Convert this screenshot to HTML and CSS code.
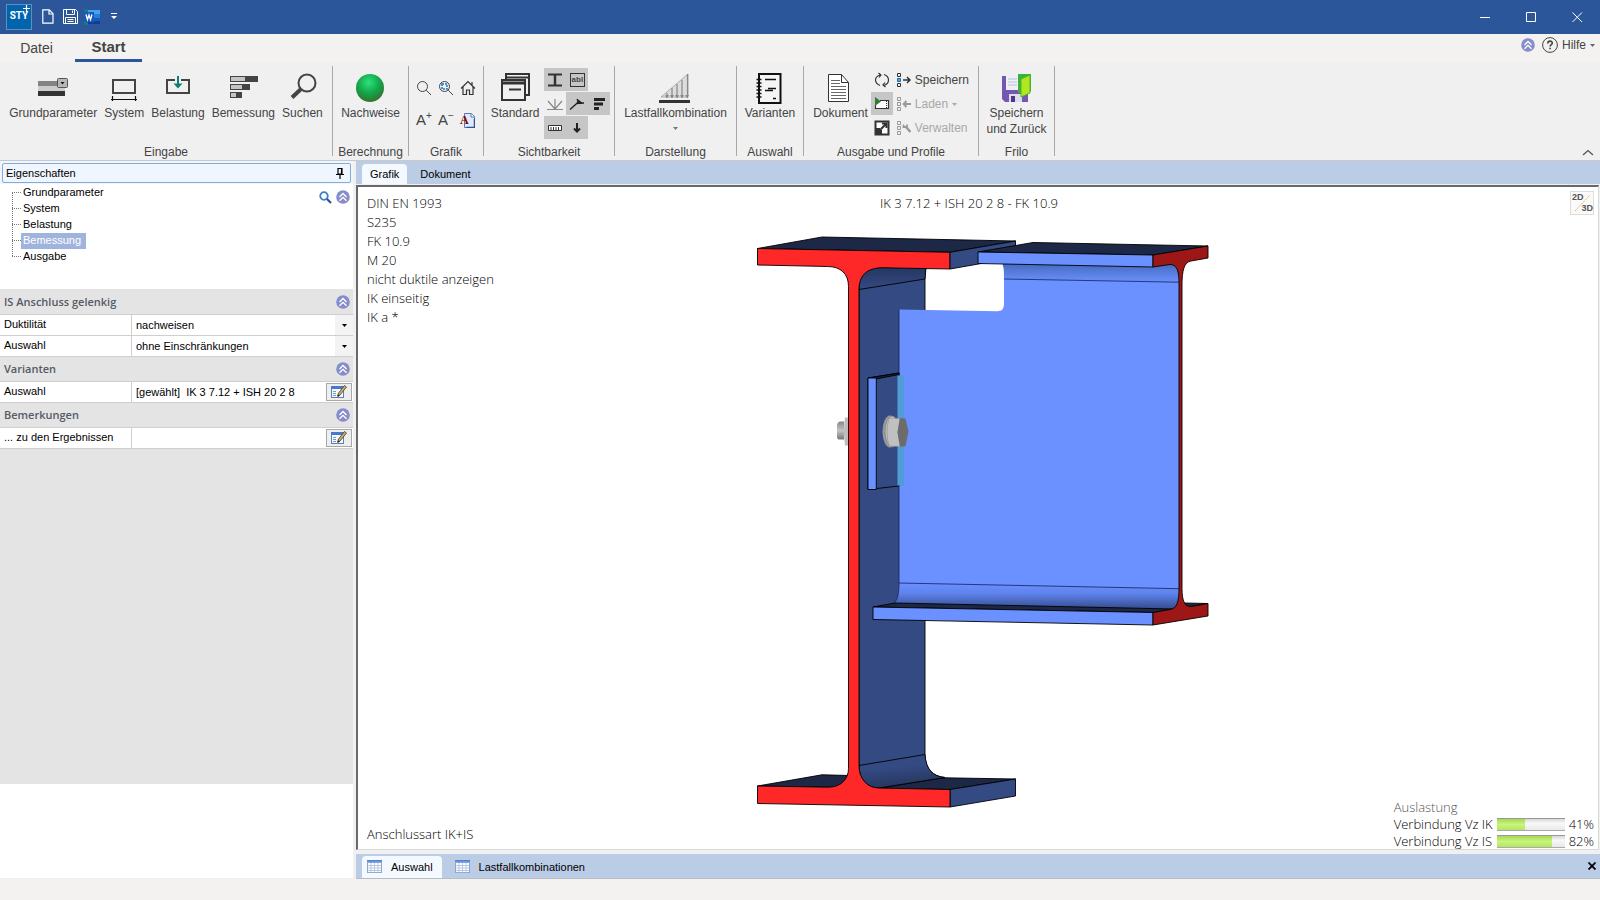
FILE: index.html
```html
<!DOCTYPE html>
<html lang="de">
<head>
<meta charset="utf-8">
<title>STY+ Eigenschaften</title>
<link rel="stylesheet" href="styles.css">
</head>
<body>
<svg class="defs" aria-hidden="true">
  <defs>
    <linearGradient id="g-chev" x1="0" y1="0" x2="1" y2="1"><stop offset="0" stop-color="#7f8fd0"/><stop offset="1" stop-color="#8f8ac6"/></linearGradient>
    <linearGradient id="g-cell" x1="0" y1="0" x2="0" y2="1"><stop offset="0" stop-color="#4a78cc"/><stop offset="1" stop-color="#8fb0e6"/></linearGradient>
    <symbol id="chev" viewBox="0 0 14 14"><circle cx="7" cy="7" r="6.800" fill="url(#g-chev)"/><path d="M3.500 7L7 3.500 10.500 7M3.500 10.800L7 7.300l3.500 3.500" fill="none" stroke="#fff" stroke-width="1.300"/></symbol>
    <symbol id="edit" viewBox="0 0 16 14"><rect x=".5" y="1.500" width="12" height="11" fill="#f4f8ff" stroke="#5d7fb5"/><rect x="0" y="1" width="13" height="3" fill="#4a78cc"/><path d="M2 6.500h3M2 8.500h3M2 10.500h3" stroke="#7d98c6"/><path d="M6.500 11l1-3 6-7.500L15.500 2l-6.500 8z" fill="#c9ae6c" stroke="#4a3c22" stroke-width=".8"/><path d="M6.500 12l.6-2.500L9 10.800z" fill="#222"/></symbol>
    <symbol id="sheet" viewBox="0 0 16 14"><rect x=".5" y=".5" width="14" height="12" fill="#fff" stroke="#8ea6c9"/><rect x="0" y="0" width="15" height="3" fill="url(#g-cell)"/><path d="M1 5.500h13M1 8h13M1 10.500h13M4 3v10M7.500 3v10M11 3v10" stroke="#a9bedc" stroke-width=".8"/></symbol>
    <symbol id="boxes" viewBox="0 0 4 14"><path d="M.5.500h3v3h-3zM.5 5.500h3v3h-3zM.5 10.500h3v3h-3z"/></symbol>
  </defs>
</svg>

<header class="titlebar">
  <div class="logo"><span>STY</span><svg width="7" height="7" viewBox="0 0 7 7" stroke="#fff" stroke-width="1.200"><path d="M3.500 0v7M0 3.500h7"/></svg></div>
  <button class="qa" aria-label="Neu"><svg width="12" height="15" viewBox="0 0 12 15" fill="none" stroke="#fff"><path d="M.8.800h6.500l3.700 3.900v9.500H.8zM7 1v4h4" stroke-width="1.200"/></svg></button>
  <button class="qa" aria-label="Speichern"><svg width="15" height="15" viewBox="0 0 15 15" fill="none" stroke="#fff"><path d="M.5.500h12l2 2v12H.5zM3.500 1v4.500h8V1M9.500 1.500v2.500M2.500 14V8.500h10V14M4.500 10.500h6M4.500 12.500h6"/></svg></button>
  <button class="qa" aria-label="Word"><svg width="16" height="16" viewBox="0 0 16 16"><path d="M3 1h13v4H3z" fill="#41a5ee"/><path d="M3 5h13v4H3z" fill="#2b7cd3"/><path d="M3 9h13v3H3z" fill="#185abd"/><path d="M3 12h13v3H3z" fill="#103f91"/><rect x="0" y="0" width="4" height="16" fill="#157a80"/><rect x="0" y="3" width="10" height="10" fill="#185abd"/><path d="M2 5.500l1.500 5L5 6l1.500 4.500L8 5.500" fill="none" stroke="#fff" stroke-width="1.300"/></svg></button>
  <button class="qa" aria-label="Anpassen"><svg width="6" height="7" viewBox="0 0 6 7" fill="#fff"><path d="M0 0h6v1H0zM0 3h6L3 6z"/></svg></button>
  <div class="winctl">
    <button aria-label="Minimieren"><svg width="11" height="11" viewBox="0 0 11 11" stroke="#fff"><path d="M0 5.500h10"/></svg></button>
    <button aria-label="Maximieren"><svg width="11" height="11" viewBox="0 0 11 11" stroke="#fff" fill="none"><path d="M.5.500h9v9h-9z"/></svg></button>
    <button aria-label="Schließen"><svg width="11" height="11" viewBox="0 0 11 11" stroke="#fff"><path d="M.5.500l9.500 9.500M10 .5L.5 10"/></svg></button>
  </div>
</header>

<nav class="menu">
  <button class="menutab">Datei</button>
  <button class="menutab active">Start</button>
  <div class="help">
    <svg width="14" height="14"><use href="#chev"/></svg>
    <button class="helpbtn"><svg width="16" height="16" viewBox="0 0 16 16" fill="none" stroke="#444"><circle cx="8" cy="8" r="7.400"/><path d="M5.800 6.400c0-3 4.500-3 4.500-.4 0 1.600-2.200 1.600-2.200 3.500M8.100 10.700v1.600" stroke-width="1.600"/></svg>Hilfe<svg width="5" height="3" viewBox="0 0 5 3"><path d="M0 0h5L2.500 3z" fill="#666"/></svg></button>
  </div>
</nav>

<section class="ribbon">
  <div class="group g-in">
    <div class="tools">
      <button class="big"><svg width="32" height="32" viewBox="0 0 32 32"><path d="M1 8h27v5H1z" fill="#858585"/><path d="M1 13h27v5H1z" fill="#cdcdcd"/><path d="M1 18h27v5H1z" fill="#333"/><rect x="20.500" y="5.500" width="10" height="9" rx="1" fill="#b8b8b8" stroke="#555"/><path d="M23.500 9h4L25.500 11.500z" fill="#111"/></svg>Grundparameter</button>
      <button class="big"><svg width="32" height="32" viewBox="0 0 32 32" fill="none" stroke="#444"><path d="M5 7h22v13H5z" stroke-width="2"/><path d="M3 26.500h26M4.500 23v5M27.500 23v5" stroke="#111" stroke-width="1.200"/></svg>System</button>
      <button class="big"><svg width="32" height="32" viewBox="0 0 32 32" fill="none"><path d="M5 7h22v13H5z" stroke="#444" stroke-width="2"/><path d="M16 3v10" stroke="#f0f0f0" stroke-width="6"/><path d="M16 3v10" stroke="#0b8074" stroke-width="2"/><path d="M11.500 10.500l4.500 5 4.500-5z" fill="#0b8074"/></svg>Belastung</button>
      <button class="big"><svg width="32" height="32" viewBox="0 0 32 32"><path d="M3 3h28v6H3zM3 11h20v6H3zM3 19h12v6H3z" fill="#444"/><path d="M4 4h14v4H4zM4 12h11v4H4zM4 20h5v4H4z" fill="#c4c4c4"/></svg>Bemessung</button>
      <button class="big"><svg width="32" height="32" viewBox="0 0 32 32" fill="none" stroke="#444"><circle cx="21" cy="10" r="8.500" stroke-width="2"/><path d="M15 16L6 24.500" stroke-width="4"/></svg>Suchen</button>
    </div>
    <div class="caption">Eingabe</div>
  </div>
  <div class="group g-calc">
    <div class="tools"><button class="big"><svg width="32" height="32" viewBox="0 0 32 32"><defs><radialGradient id="g-ball" cx=".45" cy=".3" r=".75"><stop offset="0" stop-color="#2fe07c"/><stop offset=".5" stop-color="#12a94c"/><stop offset=".85" stop-color="#2c7d33"/><stop offset="1" stop-color="#5b6d2e"/></radialGradient></defs><circle cx="16" cy="15" r="14" fill="url(#g-ball)"/></svg>Nachweise</button></div>
    <div class="caption">Berechnung</div>
  </div>
  <div class="group g-graf">
    <div class="tools grid3">
      <button class="ico" aria-label="Zoom"><svg width="16" height="16" viewBox="0 0 16 16" fill="none" stroke="#444"><circle cx="6.500" cy="6.500" r="5"/><path d="M10.200 10.200L15 15"/></svg></button>
      <button class="ico" aria-label="Zoom Bereich"><svg width="16" height="16" viewBox="0 0 16 16" fill="none" stroke="#444"><circle cx="6.500" cy="6.500" r="5"/><path d="M10.200 10.200L15 15"/><path d="M4 4h5v5H4z" stroke="#1877c9" stroke-width="1.500" stroke-dasharray="2 1"/></svg></button>
      <button class="ico" aria-label="Gesamtansicht"><svg width="16" height="16" viewBox="0 0 16 16" fill="none" stroke="#333" stroke-width="1.200"><path d="M1 8.500l7-7 7 7M3 7v7.500h3.500V10h3v4.500H13V7M12 5V2"/></svg></button>
      <button class="ico letter">A<sup>+</sup></button>
      <button class="ico letter">A<sup>−</sup></button>
      <button class="ico docA"><svg width="14" height="15" viewBox="0 0 14 15"><path d="M3.500.500h7l3 3v11h-10z" fill="#dfeafb" stroke="#5b78b5"/><path d="M13.500 6v8.500h-8" fill="none" stroke="#2f4f9a" stroke-width="1.500"/><path d="M10 .5v3.500h3.500" fill="#fff" stroke="#5b78b5"/></svg><b>A</b></button>
    </div>
    <div class="caption">Grafik</div>
  </div>
  <div class="group g-vis">
    <div class="tools">
      <button class="big"><svg width="32" height="32" viewBox="0 0 32 32" fill="none" stroke="#333"><path d="M7 1h23v21h-3" stroke-width="2"/><path d="M7 4.500h23M7 0v8" stroke-width="2"/><path d="M3 7h23v20H3z" stroke-width="2"/><path d="M3 10h23" stroke-width="3"/><path d="M10 16.500h12" stroke-width="2"/></svg>Standard</button>
      <div class="toggles">
        <div><button class="tg on" aria-label="Profil"><svg width="16" height="16" viewBox="0 0 16 16" fill="none" stroke="#333"><path d="M1 2.500h14M1 13.500h14" stroke-width="2"/><path d="M8 3v10" stroke-width="2.500"/></svg></button><button class="tg on abl">abl</button></div>
        <div><button class="tg" aria-label="Linien"><svg width="16" height="16" viewBox="0 0 16 16" fill="none" stroke="#888"><path d="M0 13.500h16M8 13V3M8 13L1 5M8 13l7-8" stroke-width="1.200"/></svg></button><button class="tg on" aria-label="Winkel"><svg width="16" height="16" viewBox="0 0 16 16" fill="none" stroke="#222"><path d="M1 13.500l9-8M7 7.500l8-.5" stroke-width="1.500"/><path d="M8 3l1 4h4z" fill="#222"/></svg></button><button class="tg on" aria-label="Balken"><svg width="16" height="16" viewBox="0 0 16 16"><path d="M3 2h11v3H3zM3 6.500h9v3H3zM3 11h5v3H3z" fill="#222"/></svg></button></div>
        <div><button class="tg on" aria-label="Maß"><svg width="16" height="16" viewBox="0 0 16 16" fill="none" stroke="#333"><path d="M1.500 5.500h13v5h-13z" fill="#fff"/><path d="M4 7v3M6.500 7v3M9 7v3M11.500 7v3"/></svg></button><button class="tg on" aria-label="Last"><svg width="16" height="16" viewBox="0 0 16 16" fill="none" stroke="#222" stroke-width="2"><path d="M8 3v9M5 8.500l3 3 3-3"/></svg></button></div>
      </div>
    </div>
    <div class="caption">Sichtbarkeit</div>
  </div>
  <div class="group g-view">
    <div class="tools"><button class="big"><svg width="32" height="32" viewBox="0 0 32 32"><path d="M2 24L29 1v23z" fill="#ddd" stroke="#888" stroke-width=".6"/><path d="M8 20v5M13 15v10M18 11v14M23 7v18M28.500 1v24" stroke="#888" stroke-width="1.200"/><path d="M6 22h4l-2 3zM11 22h4l-2 3zM16 22h4l-2 3zM21 22h4l-2 3zM26 22h4l-2 3z" fill="#888"/><path d="M0 27h31v3H0z" fill="#333"/></svg>Lastfallkombination<svg class="drop" width="5" height="3" viewBox="0 0 5 3"><path d="M0 0h5L2.500 3z" fill="#777"/></svg></button></div>
    <div class="caption">Darstellung</div>
  </div>
  <div class="group g-var">
    <div class="tools"><button class="big"><svg width="32" height="32" viewBox="0 0 32 32" fill="none" stroke="#111"><path d="M5 1h21.500v29H5z" stroke-width="2" fill="#f4f4f4"/><path d="M2.500 6.500h5M2.500 10h5M2.500 13.500h5M2.500 17h5M2.500 20.500h5M2.500 24h5" stroke-width="1.500"/><path d="M11 6.500h11M14 15.500h8M11 17.500h8M19 25.500h3" stroke-width="1.300"/></svg>Varianten</button></div>
    <div class="caption">Auswahl</div>
  </div>
  <div class="group g-out">
    <div class="tools">
      <button class="big"><svg width="32" height="32" viewBox="0 0 32 32" fill="#fff" stroke="#333"><path d="M4.500 1.500h13l7 8v19h-20z"/><path d="M17.500 1.500v8h7" fill="none"/><path d="M7 7.500h9M7 10.500h9M7 13.500h15M7 16.500h15M7 19.500h15M7 22.500h15M7 25.500h15" stroke="#666"/></svg>Dokument</button>
      <div class="iconcol">
        <button class="tg" aria-label="Aktualisieren"><svg width="16" height="16" viewBox="0 0 16 16" fill="none" stroke="#333" stroke-width="1.200"><path d="M6 13.500C0 11 0 5 6 3M10 2.500c6 2 6 9 0 11M4.500 1l2.500 2-2 2.500M11.500 15L9 13l2-2.500"/></svg></button>
        <button class="tg on" aria-label="Vorschau"><svg width="16" height="16" viewBox="0 0 16 16"><path d="M6 4.500h8.500v8h-13V9" fill="#fff" stroke="#333" stroke-width="1.200"/><path d="M12.500 5v7" stroke="#333" stroke-dasharray="1 1"/><path d="M1 1l6 4.500L1 10z" fill="#2e7d32"/></svg></button>
        <button class="tg" aria-label="Vergrößern"><svg width="16" height="16" viewBox="0 0 16 16"><path d="M1.500 1.500h13v13h-13z" fill="#fff" stroke="#333" stroke-width="2"/><path d="M1 8h5l2 2v5H1z" fill="#333"/><path d="M7 9l5-5M8 3.500h4.500V8" fill="none" stroke="#333" stroke-width="2"/></svg></button>
      </div>
      <div class="lines">
        <button><svg width="14" height="14" viewBox="0 0 14 14" fill="none" stroke="#333"><path d="M.5.500h3v3h-3zM.5 10.500h3v3h-3z"/><path d="M.5 5.500h3v3h-3z" fill="#49a6e0" stroke="#1b6fae"/><path d="M6 7h7M10 4l3 3-3 3" stroke-width="1.500"/></svg>Speichern</button>
        <button disabled><svg width="14" height="14" viewBox="0 0 14 14" fill="none" stroke="#999"><use href="#boxes" width="4" height="14"/><path d="M6.500 7h7.500M9.500 4l-3 3 3 3" stroke-width="1.800"/></svg>Laden<svg width="5" height="3" viewBox="0 0 5 3"><path d="M0 0h5L2.500 3z" fill="#aaa"/></svg></button>
        <button disabled><svg width="14" height="14" viewBox="0 0 14 14" fill="none" stroke="#999"><use href="#boxes" width="4" height="14"/><path d="M9 6l4.500 5" stroke-width="2.500"/><path d="M6.500 3.500v2.500h3.500V3.500" stroke-width="1.800"/></svg>Verwalten</button>
      </div>
    </div>
    <div class="caption">Ausgabe und Profile</div>
  </div>
  <div class="group g-frilo">
    <div class="tools"><button class="big"><svg width="32" height="32" viewBox="0 0 32 32"><path d="M1 3h26v26H4l-3-3z" fill="#7358b0"/><path d="M5 3h13v14H5z" fill="#eef0f6"/><path d="M7 6h9M7 9h9M7 12h9" stroke="#bcc2d2"/><path d="M8 21h13v8H8z" fill="#dcdcea"/><path d="M10 23h4v6h-4z" fill="#4c3688"/><path d="M17 1h13v17l-3 2H17z" fill="#3bb23f"/><path d="M20 6l9-4v18l-9 4z" fill="#b2e61d" stroke="#4cb52c"/></svg>Speichern<br>und Zurück</button></div>
    <div class="caption">Frilo</div>
  </div>
  <button class="collapse" aria-label="Menüband reduzieren"><svg width="12" height="7" viewBox="0 0 12 7" fill="none" stroke="#555" stroke-width="1.300"><path d="M1 6l5-4.500L11 6"/></svg></button>
</section>

<div class="work">
  <aside class="side">
    <div class="sidehead"><div class="sidetitle">Eigenschaften<svg width="8" height="11" viewBox="0 0 8 11" fill="none" stroke="#000"><path d="M2 .5h4V6H2zM0 6.500h8M4 7v4M5.500 1v5" stroke-width="1.200"/></svg></div></div>
    <div class="treebox">
      <ul class="tree">
        <li><a href="#">Grundparameter</a></li>
        <li><a href="#">System</a></li>
        <li><a href="#">Belastung</a></li>
        <li><a href="#" class="sel">Bemessung</a></li>
        <li><a href="#">Ausgabe</a></li>
      </ul>
      <div class="treetools">
        <svg width="13" height="13" viewBox="0 0 13 13" fill="none"><circle cx="5" cy="5" r="3.800" stroke="#3b82cc" stroke-width="1.800"/><path d="M8 8l4 4" stroke="#2c4f9c" stroke-width="2.200"/></svg>
        <svg width="14" height="14"><use href="#chev"/></svg>
      </div>
    </div>
    <h2>IS Anschluss gelenkig<svg width="14" height="14"><use href="#chev"/></svg></h2>
    <div class="row"><label for="dukt">Duktilität</label><div class="val"><select id="dukt"><option>nachweisen</option></select><span class="arr"><svg width="5" height="3" viewBox="0 0 5 3"><path d="M0 0h5L2.500 3z"/></svg></span></div></div>
    <div class="row"><label for="ausw">Auswahl</label><div class="val"><select id="ausw"><option>ohne Einschränkungen</option></select><span class="arr"><svg width="5" height="3" viewBox="0 0 5 3"><path d="M0 0h5L2.500 3z"/></svg></span></div></div>
    <h2>Varianten<svg width="14" height="14"><use href="#chev"/></svg></h2>
    <div class="row"><label for="vari">Auswahl</label><div class="val"><input id="vari" value="[gewählt]&nbsp; IK 3 7.12 + ISH 20 2 8"><button class="edit" aria-label="Variante bearbeiten"><svg width="16" height="14"><use href="#edit"/></svg></button></div></div>
    <h2>Bemerkungen<svg width="14" height="14"><use href="#chev"/></svg></h2>
    <div class="row"><label for="bem">... zu den Ergebnissen</label><div class="val"><input id="bem" value=""><button class="edit" aria-label="Bemerkung bearbeiten"><svg width="16" height="14"><use href="#edit"/></svg></button></div></div>
    <div class="filler"></div>
    <div class="hint"></div>
  </aside>

  <main class="main">
    <div class="tabs"><button class="tab active">Grafik</button><button class="tab">Dokument</button></div>
    <div class="canvas">
      <svg class="model" viewBox="358 187 1240 661" role="img" aria-label="3D-Ansicht Anschluss">
        <defs>
          <linearGradient id="f1" x1="0" y1="0" x2="0" y2="1"><stop offset="0" stop-color="#253662"/><stop offset="1" stop-color="#344a82"/></linearGradient>
          <linearGradient id="f2" x1="0" y1="0" x2="0" y2="1"><stop offset="0" stop-color="#466bc0"/><stop offset="1" stop-color="#6b90ff"/></linearGradient>
          <linearGradient id="f3" x1="0" y1="0" x2="0" y2="1"><stop offset="0" stop-color="#6b90ff"/><stop offset=".4" stop-color="#5f83ec"/><stop offset="1" stop-color="#32498a"/></linearGradient>
          <linearGradient id="f4" x1="0" y1="0" x2=".25" y2="1"><stop offset="0" stop-color="#344a82"/><stop offset=".45" stop-color="#344a82"/><stop offset="1" stop-color="#26375f"/></linearGradient>
          <linearGradient id="nut" x1="0" y1="0" x2="0" y2="1"><stop offset="0" stop-color="#888"/><stop offset=".5" stop-color="#c4c4c4"/><stop offset="1" stop-color="#777"/></linearGradient>
        </defs>
        <g stroke="#000" stroke-width=".9" stroke-linejoin="round">
          <path d="M757.500 248L822 236.500l193.500 4-65.500 11.300z" fill="#1c2846"/>
          <path d="M757.500 785.500L822 774.300l122 3 71.500 1.200L950 789z" fill="#1c2846"/>
          <path d="M950 789l65.500-10.500v17L950 806.500z" fill="#344a82"/>
          <path d="M859 266h67.500c-1.500 4-1.500 8-1.500 12v476c0 15 8 22 20 23l-66 10.500h-20z" fill="#344a82"/>
          <path d="M859 267h67l-1 11.500-66 10.500z" fill="url(#f1)"/>
          <path d="M859 765l66-11c1 15 8 22 20 23l-66 10.500c-12 0-20-8-20-22.500z" fill="url(#f4)"/>
          <path d="M757.500 248L950 251.800v16.700l-67-1.200c-17-.3-24 8.700-24 21.700v476c0 13 8 22.500 20 22.500l71 1.500v17.500L757.500 803v-17.500l70 1.200c14 .3 21-8.700 21-18.700V286c0-13-8-20-21-20l-70-1.500z" fill="#ff2828"/>
          <path d="M950 268.500v-16.700l65.500-11.300V256l-37 7.500z" fill="#344a82"/>
        </g>
        <path d="M899 309l98 1.800q7 .2 7-7V264h175v344H894c4-4 5-12 5-25z" fill="#6b90ff"/>
        <path d="M1004 278c0-7 0-10-1.500-14.500H1178l1 18z" fill="url(#f2)"/>
        <path d="M899 582.500l280 5.500c0 13-2 20-6 21L894 603c4-4 5-12 5-20.500z" fill="url(#f3)"/>
        <path d="M1004 278.500l175 3.200M899 582.500l280 5.700M899 309v273c0 10-1 17-5 20.500" fill="none" stroke="#122454" stroke-width=".8"/>
        <g stroke="#000" stroke-width=".9" stroke-linejoin="round">
          <path d="M978 251.500l55-9.500 175 3.500-55 9z" fill="#1c2846"/>
          <path d="M978 251.500l175 3v12L978 263z" fill="#6b90ff"/>
          <path d="M873 606.500l22-4 279 6-21 3.500z" fill="#1c2846"/>
          <path d="M873 606.500l280 5.500v12.500L873 619z" fill="#6b90ff"/>
          <path d="M1184 602.500l24 .5-20 3.500z" fill="#1c2846"/>
          <path d="M1153 254.500l55-9v12l-17 3c-7 1-9 10-9 24V588c0 11 2 18 9 18l17-3v12.500l-55 9V612l17-3c7-1 9-8 9-21V282c0-11-2-18-9-18l-17 2.500z" fill="#9d1717"/>
          <path d="M868 377.500l31-5v113l-31 3.500z" fill="#344a82"/>
          <path d="M868 377.500l31-5v1.500l-23 4.500z" fill="#14203f"/>
          <path d="M868 377.500h8.300V489H868z" fill="#6b90ff"/>
        </g>
        <path d="M897.500 375h6.500v110h-6.500z" fill="#529bd9"/>
        <path d="M845 417h3v28h-3q-2-14 0-28z" fill="#bdbdbd"/>
        <path d="M837 424q1-3 3-3h4v18h-5q-2 0-2-3z" fill="url(#nut)"/>
        <ellipse cx="890" cy="431" rx="7.500" ry="16" fill="#9b9b9b"/>
        <ellipse cx="892" cy="431" rx="7" ry="15.500" fill="#c2c2c2" stroke="#777" stroke-width=".7"/>
        <path d="M889 417.500l11 .5-2 13 2 15-11-.5q-4-14 0-28z" fill="#c0c0c0" stroke="#8a8a8a" stroke-width=".6"/>
        <path d="M900 417.500l5.500.5 3 13-3 15H900l-2.500-14z" fill="#6c6c6c"/>
      </svg>
      <div class="info">DIN EN 1993<br>S235<br>FK 10.9<br>M 20<br>nicht duktile anzeigen<br>IK einseitig<br>IK a *</div>
      <div class="heading">IK 3 7.12 + ISH 20 2 8 - FK 10.9</div>
      <button class="dim"><span>2D</span><span>3D</span><svg width="22" height="22" viewBox="0 0 22 22"><path d="M4 19L19 3" stroke="#efb65a" stroke-dasharray="2 1"/></svg></button>
      <div class="kind">Anschlussart IK+IS</div>
      <div class="usage">
        <span class="dimtext">Auslastung</span><i></i><i></i>
        <span>Verbindung Vz IK</span><div class="bar"><div class="fill" style="width:41%"></div></div><span>41%</span>
        <span>Verbindung Vz IS</span><div class="bar"><div class="fill" style="width:82%"></div></div><span>82%</span>
      </div>
    </div>
    <div class="bottomtabs">
      <button class="tab active"><svg width="16" height="14"><use href="#sheet"/></svg>Auswahl</button>
      <button class="tab"><svg width="16" height="14"><use href="#sheet"/></svg>Lastfallkombinationen</button>
      <button class="close" aria-label="Schließen"><svg width="8" height="8" viewBox="0 0 8 8" stroke="#000" stroke-width="1.800"><path d="M.5.500l7 7M7.500.500l-7 7"/></svg></button>
    </div>
  </main>
</div>
<footer class="status"></footer>
</body>
</html>
```
FILE: styles.css
```css
* { box-sizing: border-box; }
html, body { height: 100%; }
body {
  margin: 0;
  display: flex;
  flex-direction: column;
  min-height: 100vh;
  overflow: hidden;
  background: #f0f0f0;
  color: #444;
  font: 12px/16px "Liberation Sans", Arial, sans-serif;
}
button, input, select { font: inherit; color: inherit; background: none; border: 0; padding: 0; margin: 0; border-radius: 0; }
svg { display: block; flex: none; }
.defs { position: absolute; width: 0; height: 0; }

/* title bar */
.titlebar { display: flex; align-items: center; height: 34px; background: #2b579a; padding-left: 6px; }
.logo { width: 26px; height: 26px; margin-right: 8px; background: #0064ae; border: 1px solid #6390b4; color: #fff; font: 700 10px/22px "Roboto", sans-serif; text-align: center; position: relative; }
.logo svg { position: absolute; right: 1px; top: 0; }
.qa { width: 16px; height: 22px; margin-right: 6px; padding-bottom: 1px; display: flex; align-items: center; justify-content: center; }
.winctl { margin-left: auto; display: flex; }
.winctl button { width: 46px; height: 34px; display: flex; align-items: center; justify-content: center; }

/* menu */
.menu { display: flex; align-items: flex-start; height: 28px; background: #f3f2f1; }
.menutab { font-size: 14px; line-height: 26px; height: 28px; width: 73px; }
.menutab.active { font-size: 15px; font-weight: 700; width: 67px; margin-left: 2px; border-bottom: 3px solid #2b579a; }
.help { margin-left: auto; display: flex; align-items: center; gap: 7px; padding: 3px 5px 0 0; }
.helpbtn { display: flex; align-items: center; gap: 4px; }

/* ribbon */
.ribbon { display: flex; height: 99px; padding: 4px 0; border-bottom: 1px solid #c8c8c8; }
.group { display: flex; flex-direction: column; border-right: 1px solid #a8a8a8; height: 90px; }
.tools { display: flex; flex: 1; justify-content: center; align-items: flex-start; }
.caption { text-align: center; line-height: 16px; margin-bottom: -4px; white-space: nowrap; }
.big { display: flex; flex-direction: column; align-items: center; padding-top: 7px; white-space: nowrap; line-height: 16px; }
.drop { margin-top: 6px; }
.g-in { width: 333px; }
.g-in .tools { gap: 7px; }
.g-calc { width: 76px; }
.g-graf { width: 75px; }
.g-vis { width: 131px; }
.g-view { width: 122px; }
.g-var { width: 67px; }
.g-out { width: 175px; }
.g-frilo { width: 76px; }
.grid3 { display: grid; grid-template-columns: repeat(3, 22px); grid-auto-rows: 32px; padding-top: 6px; }
.ico { display: flex; align-items: center; justify-content: center; position: relative; width: 22px; height: 32px; }
.letter { font-size: 15px; }
.letter sup { font-size: 10px; line-height: 8px; align-self: flex-start; padding-top: 8px; }
.docA b { position: absolute; left: 3px; top: 9px; font: 700 12px/14px "Liberation Serif", serif; color: #8b0000; }
.g-vis .tools { gap: 5px; padding-left: 3px; }
.toggles { padding-top: 2px; }
.toggles > div { display: flex; height: 24px; }
.tg { width: 22px; height: 23px; display: flex; align-items: center; justify-content: center; }
.tg.on { background: #c6c6c6; }
.abl { font: 700 8px/10px "Liberation Sans", sans-serif; }
.abl::before { content: ""; position: absolute; width: 13px; height: 12px; border: 1px solid #333; }
.iconcol { display: flex; flex-direction: column; gap: 1px; padding-top: 2px; margin-left: 3px; }
.lines { display: flex; flex-direction: column; padding-top: 2px; margin-left: 4px; }
.lines button { height: 24px; display: flex; align-items: center; gap: 4px; }
.lines button:disabled { color: #a8a8a8; }
.collapse { margin-left: auto; align-self: flex-end; padding: 0 6px 0 0; }

/* work area */
.work { flex: 1; display: flex; min-height: 0; color: #000; font-size: 11px; }
.side { width: 353px; display: flex; flex-direction: column; margin-right: 3px; }
.sidehead { background: #eef5fd; padding: 2px 2px 1px; }
.sidetitle { display: flex; align-items: center; justify-content: space-between; height: 20px; border: 1px solid #86abd9; border-radius: 2px; padding: 0 6px 0 3px; background: #eff6ff; }
.treebox { display: flex; justify-content: space-between; background: #fff; height: 105px; padding: 0 3px 0 12px; }
.tree { list-style: none; margin: 0; padding: 0; }
.tree li { height: 16px; padding-left: 9px; position: relative; }
.tree li::before { content: ""; position: absolute; left: 0; top: 8px; width: 9px; border-top: 1px dotted #777; }
.tree li::after { content: ""; position: absolute; left: 0; top: 8px; height: 16px; border-left: 1px dotted #777; }
.tree li:last-child::after { display: none; }
.tree a { display: inline-block; line-height: 14px; height: 16px; padding: 0 5px 0 2px; color: #000; text-decoration: none; }
.tree .sel { background: #9fb4dc; color: #fff; }
.treetools { display: flex; gap: 4px; padding-top: 6px; height: 20px; align-items: center; }
.side h2 { margin: 0; height: 25px; padding: 0 3px 0 4px; display: flex; align-items: center; justify-content: space-between; background: #e4e4e4; color: #555a66; font: 600 11px/24px "Open Sans", "Noto Sans", sans-serif; }
.row { display: grid; grid-template-columns: 131px 1fr; height: 21px; background: #fff; border-top: 1px solid #cfcfcf; }
.row + h2, .row + .filler { border-top: 1px solid #cfcfcf; }
.row label { padding-left: 4px; line-height: 19px; }
.val { display: flex; border-left: 1px solid #cfcfcf; min-width: 0; }
.val select, .val input { flex: 1; min-width: 0; appearance: none; padding-left: 4px; line-height: 20px; color: #000; outline: 0; }
.arr { width: 18px; background: #f3f3f3; display: flex; align-items: center; justify-content: center; pointer-events: none; }
.edit { width: 26px; height: 18px; margin: 1px; border: 1px solid #a8a8a8; background: #eee; display: flex; align-items: center; justify-content: center; }
.filler { flex: 335; background: #e4e4e4; }
.hint { flex: 94; background: #fff; margin-bottom: 1px; }

.main { flex: 1; min-width: 0; display: flex; flex-direction: column; }
.tabs { display: flex; align-items: flex-end; height: 23px; background: #bbcde6; padding-left: 6px; }
.tab { display: flex; align-items: center; gap: 8px; height: 20px; padding: 0 8px; color: #000; }
.tab.active { background: #f3f9ff; border-radius: 4px 4px 0 0; }
.tabs .tab + .tab { margin-left: 5px; }
.canvas { flex: 1; min-height: 0; position: relative; margin: 1px 1px 4px 0; background: #fff; border: 1px solid #d9d9d9; border-top: 2px solid #696969; border-left: 2px solid #696969; color: #000; font: 300 13px/19px "Open Sans", "Noto Sans", sans-serif; }
.model { position: absolute; inset: 0; width: 100%; height: 100%; }
.info { position: absolute; left: 9px; top: 7px; }
.heading { position: absolute; left: 0; right: 18px; top: 7px; text-align: center; }
.dim { position: absolute; right: 4px; top: 4px; width: 24px; height: 24px; border: 1px solid #ddd; background: #fafafa; color: #555; font: 900 9px/12px "Liberation Sans", sans-serif; display: grid; align-content: space-between; }
.dim span { text-align: right; line-height: 11px; }
.dim span:first-child { text-align: left; padding-left: 1px; }
.dim svg { position: absolute; left: 0; top: 0; }
.kind { position: absolute; left: 9px; bottom: 5px; }
.usage { position: absolute; right: 4px; bottom: -1px; display: grid; grid-template-columns: auto 68px auto; column-gap: 4px; grid-auto-rows: 17px; align-items: center; line-height: 17px; }
.dimtext { color: #555; }
.bar { height: 13px; border-top: 1px solid #999; border-bottom: 1px solid #aaa; background: linear-gradient(#d8d8d8, #f8f8f8 40%, #e8e8e8); }
.fill { height: 100%; background: linear-gradient(#a8d858, #c8f57a 50%, #b4e566); }
.bottomtabs { display: flex; align-items: flex-end; height: 25px; background: #bbcde6; padding-left: 6px; border-bottom: 1px solid #b8bcc4; }
.bottomtabs .tab { height: 22px; padding: 0 9px 0 5px; }
.bottomtabs .tab + .tab { margin-left: 8px; }
.close { margin: 0 4px 8px auto; }
.status { height: 21px; background: #f3f2f1; }
```
